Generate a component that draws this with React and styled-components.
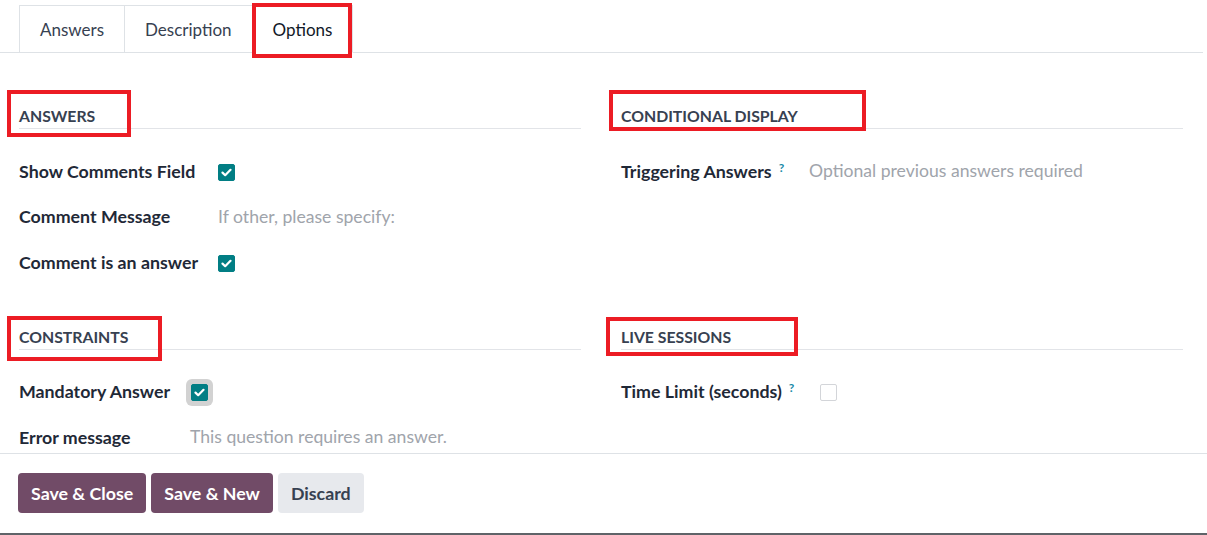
import React from "react";
import styled, { createGlobalStyle } from "styled-components";

// Global
const GlobalStyle = createGlobalStyle`
  * { box-sizing: border-box; }
  body {
    margin: 0;
    background: #fff;
    font-family: Lato, "Liberation Sans", sans-serif;
  }
`;

const Frame = styled.div`
  width: 1207px;
  height: 535px;
  display: flex;
  flex-direction: column;
  border-bottom: 2px solid #5f6368;
  overflow: hidden;
`;

// Tabs
const TabBar = styled.div`
  display: flex;
  padding: 5px 0 0 19px;
  margin-right: 4px;
  border-bottom: 1px solid #dee2e6;
`;

const Tab = styled.div`
  position: relative;
  height: 48px;
  margin-bottom: -1px;
  padding: 0 20px;
  display: flex;
  align-items: center;
  font-size: 17px;
  color: ${(p) => (p.$active ? "#111827" : "#374151")};
  background: #fff;
  border: 1px solid #dee2e6;
  border-bottom-color: ${(p) => (p.$active ? "#fff" : "#dee2e6")};
  & + & {
    border-left: none;
  }
`;

// red annotation boxes drawn over the screenshot
const Mark = styled.span`
  position: absolute;
  top: ${(p) => p.$t}px;
  left: ${(p) => p.$l}px;
  width: ${(p) => p.$w}px;
  height: ${(p) => p.$h}px;
  border: 4px solid #ec1c24;
  pointer-events: none;
`;

// Body
const Sheet = styled.div`
  height: 400px;
  overflow: hidden;
  padding: 53px 24px 0 19px;
  display: grid;
  grid-template-columns: 562px 562px;
  column-gap: 40px;
  row-gap: 42px;
  align-content: start;
`;

const Group = styled.section`
  display: flex;
  flex-direction: column;
`;

const GroupTitle = styled.h3`
  position: relative;
  margin: 0 0 19px;
  padding-bottom: 2px;
  line-height: 20px;
  font-size: 15.8px;
  font-weight: 700;
  text-transform: uppercase;
  color: #374151;
  border-bottom: 1px solid #e2e4e8;
`;

const Row = styled.div`
  display: grid;
  grid-template-columns: ${(p) => p.$label}px 1fr;
  align-items: center;
  height: 45.5px;
`;

const Label = styled.label`
  font-size: 17.8px;
  font-weight: 700;
  color: #1f2937;
  display: flex;
  align-items: flex-start;
`;

const Help = styled.sup`
  font-size: 12px;
  font-weight: 700;
  color: #1a8ba8;
  margin-left: 7px;
  line-height: 1;
  position: relative;
  top: 2px;
`;

const Placeholder = styled.span`
  font-size: 17.6px;
  color: #a0a4ab;
`;

const Check = styled.span`
  width: 17px;
  height: 17px;
  border-radius: 2px;
  display: inline-flex;
  align-items: center;
  justify-content: center;
  vertical-align: middle;
  background: ${(p) => (p.$on ? "#017e84" : "#fff")};
  border: 1px solid ${(p) => (p.$on ? "#017e84" : "#d3d5d9")};
  box-shadow: ${(p) => (p.$focus ? "0 0 0 5px #d2d2d2" : "none")};
  margin-left: ${(p) => (p.$focus ? "1px" : "0")};
`;

// Footer
const Footer = styled.footer`
  flex: 1;
  border-top: 1px solid #dee2e6;
  padding: 19px 18px 0;
  display: flex;
  gap: 5px;
  align-items: flex-start;
`;

const Button = styled.button`
  height: 40px;
  padding: 0 13px;
  border: none;
  border-radius: 4px;
  font-family: inherit;
  font-size: 17.8px;
  font-weight: 700;
  color: ${(p) => (p.$primary ? "#fff" : "#374151")};
  background: ${(p) => (p.$primary ? "#714b67" : "#e7e9ed")};
`;

const Tick = () => (
  <svg width="11" height="9" viewBox="0 0 11 9">
    <path d="M1.5 4.6 L4.2 7.2 L9.5 1.8" fill="none" stroke="#fff" strokeWidth="2.2" strokeLinecap="round" strokeLinejoin="round" />
  </svg>
);

const Checkbox = ({ on, focus }) => (
  <Check $on={on} $focus={focus}>{on && <Tick />}</Check>
);

export default function App() {
  return (
    <>
      <GlobalStyle />
      <Frame>
        <TabBar>
          <Tab>Answers</Tab>
          <Tab>Description</Tab>
          <Tab $active>
            Options
            <Mark $t={-3} $l={-1} $w={100} $h={55} />
          </Tab>
        </TabBar>

        <Sheet>
          <Group>
            <GroupTitle>
              Answers
              <Mark $t={-16} $l={-12} $w={124} $h={47} />
            </GroupTitle>
            <Row $label={199}>
              <Label>Show Comments Field</Label>
              <div><Checkbox on /></div>
            </Row>
            <Row $label={199}>
              <Label>Comment Message</Label>
              <Placeholder>If other, please specify:</Placeholder>
            </Row>
            <Row $label={199}>
              <Label>Comment is an answer</Label>
              <div><Checkbox on /></div>
            </Row>
          </Group>

          <Group>
            <GroupTitle>
              Conditional Display
              <Mark $t={-16} $l={-12} $w={257} $h={41} />
            </GroupTitle>
            <Row $label={188}>
              <Label>
                Triggering Answers<Help>?</Help>
              </Label>
              <Placeholder>Optional previous answers required</Placeholder>
            </Row>
          </Group>

          <Group>
            <GroupTitle>
              Constraints
              <Mark $t={-11} $l={-12} $w={155} $h={45} />
            </GroupTitle>
            <Row $label={171}>
              <Label>Mandatory Answer</Label>
              <div><Checkbox on focus /></div>
            </Row>
            <Row $label={171}>
              <Label>Error message</Label>
              <Placeholder>This question requires an answer.</Placeholder>
            </Row>
          </Group>

          <Group>
            <GroupTitle>
              Live Sessions
              <Mark $t={-10} $l={-15} $w={192} $h={39} />
            </GroupTitle>
            <Row $label={199}>
              <Label>
                Time Limit (seconds)<Help>?</Help>
              </Label>
              <div><Checkbox /></div>
            </Row>
          </Group>
        </Sheet>

        <Footer>
          <Button $primary>Save &amp; Close</Button>
          <Button $primary>Save &amp; New</Button>
          <Button>Discard</Button>
        </Footer>
      </Frame>
    </>
  );
}
